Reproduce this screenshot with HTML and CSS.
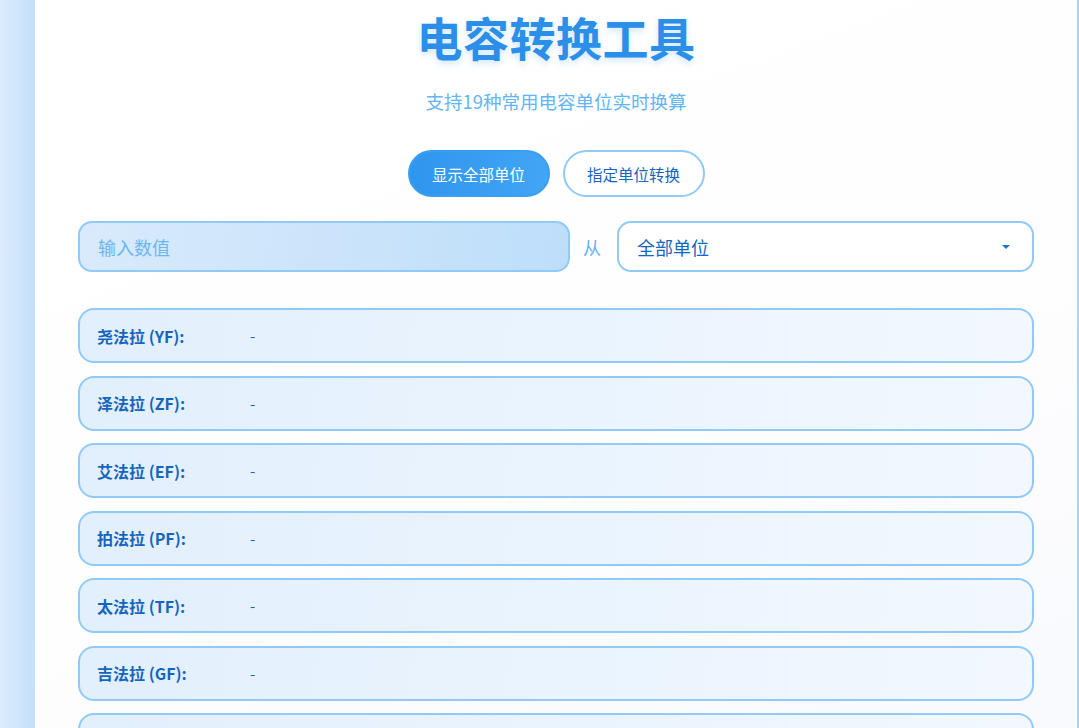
FILE: index.html
```html
<!DOCTYPE html>
<html lang="zh-CN">
<head>
<meta charset="utf-8">
<title>电容转换工具</title>
<link rel="stylesheet" href="styles.css">
</head>
<body>
<div class="page">
  <main class="container">
    <h1 class="title">电容转换工具</h1>
    <p class="subtitle">支持19种常用电容单位实时换算</p>
    <div class="modes">
      <button class="mode active">显示全部单位</button>
      <button class="mode">指定单位转换</button>
    </div>
    <div class="inputs">
      <div class="value-input">输入数值</div>
      <span class="from">从</span>
      <div class="unit-select">
        <span>全部单位</span>
        <span class="arrow"></span>
      </div>
    </div>
    <div class="results">
      <div class="row"><span class="label">尧法拉 (YF):</span><span class="val">-</span></div>
      <div class="row"><span class="label">泽法拉 (ZF):</span><span class="val">-</span></div>
      <div class="row"><span class="label">艾法拉 (EF):</span><span class="val">-</span></div>
      <div class="row"><span class="label">拍法拉 (PF):</span><span class="val">-</span></div>
      <div class="row"><span class="label">太法拉 (TF):</span><span class="val">-</span></div>
      <div class="row"><span class="label">吉法拉 (GF):</span><span class="val">-</span></div>
      <div class="row"><span class="label">兆法拉 (MF):</span><span class="val">-</span></div>
    </div>
  </main>
</div>
</body>
</html>
```

FILE: styles.css
```css
* { box-sizing: border-box; }
html, body { margin: 0; padding: 0; }
body {
  height: 728px;
  overflow: hidden;
  background: linear-gradient(90deg, #dcebfc 0px, #c4e0f9 35px, #c4e0f9 1070px, #aad2f5 1079px);
  font-family: "Noto Sans CJK SC", "Noto Sans", sans-serif;
}
.page {
  display: flex;
  padding-left: 35px;
}
.container {
  width: 1042px;
  min-height: 760px;
  background: linear-gradient(160deg, #ffffff 0%, #fefefe 55%, #f8f9fe 100%);
  padding: 8px 43px 0 43px;
  display: flex;
  flex-direction: column;
  align-items: stretch;
}
.title {
  margin: 0;
  text-align: center;
  font-size: 46px;
  line-height: 56px;
  font-weight: 700;
  color: #2b8ee8;
  text-shadow: 0 3px 6px rgba(66, 165, 245, 0.25);
  letter-spacing: 0.5px;
}
.subtitle {
  margin: 24px 0 0;
  text-align: center;
  font-size: 18.5px;
  line-height: 26px;
  color: #64b5f6;
}
.modes {
  display: flex;
  justify-content: center;
  gap: 13px;
  margin-top: 36px;
}
.mode {
  width: 142px;
  height: 47px;
  border-radius: 24px;
  border: 2px solid #90caf9;
  background: #ffffff;
  color: #1565c0;
  font-family: "Noto Sans CJK SC", "Noto Sans", sans-serif;
  font-size: 15.5px;
  padding: 0;
}
.mode.active {
  background: linear-gradient(90deg, #2f96ee, #42a5f5);
  border-color: #3a9ff2;
  color: #ffffff;
}
.inputs {
  display: grid;
  grid-template-columns: 492px auto 1fr;
  align-items: center;
  column-gap: 13px;
  margin-top: 24px;
}
.value-input {
  height: 51px;
  border: 2px solid #90caf9;
  border-radius: 14px;
  background: linear-gradient(100deg, #d9eafc 0%, #c9e3fa 60%, #bddefa 100%);
  color: #6cb6f2;
  font-size: 18px;
  padding-left: 18px;
  display: flex;
  align-items: center;
}
.from {
  color: #64b5f6;
  font-size: 18px;
  width: 21px;
}
.unit-select {
  height: 51px;
  border: 2px solid #90caf9;
  border-radius: 14px;
  background: #ffffff;
  color: #1565c0;
  font-size: 18px;
  padding: 0 22px 0 18px;
  display: flex;
  align-items: center;
  justify-content: space-between;
}
.arrow {
  width: 0;
  height: 0;
  border-left: 4px solid transparent;
  border-right: 4px solid transparent;
  border-top: 4px solid #1976d2;
}
.results {
  margin-top: 36px;
  display: flex;
  flex-direction: column;
  gap: 12.5px;
}
.row {
  height: 55px;
  flex: none;
  border: 2px solid #90caf9;
  border-radius: 16px;
  background: linear-gradient(100deg, #e2effc 0%, #eaf4fe 50%, #f2f8fe 100%);
  display: flex;
  align-items: center;
  padding-left: 17px;
  color: #1565c0;
  font-size: 16px;
}
.label {
  font-weight: 700;
  width: 153px;
  flex: none;
}
.val {
  font-weight: 400;
  font-size: 15px;
}
```
